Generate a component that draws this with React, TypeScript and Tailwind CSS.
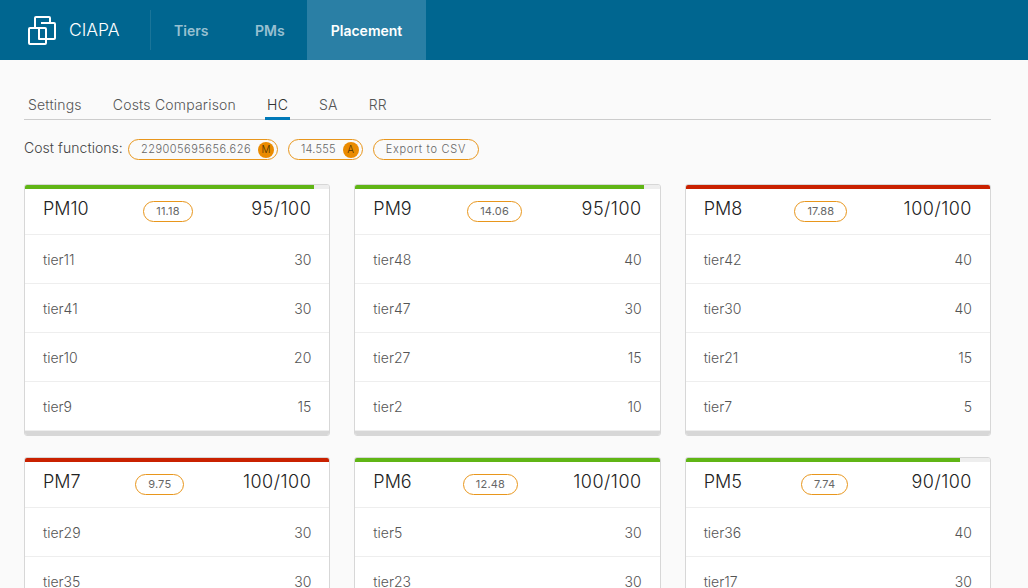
const cards = [
  { name: "PM10", cost: "11.18", used: 95, tiers: [["tier11", 30], ["tier41", 30], ["tier10", 20], ["tier9", 15]] },
  { name: "PM9", cost: "14.06", used: 95, tiers: [["tier48", 40], ["tier47", 30], ["tier27", 15], ["tier2", 10]] },
  { name: "PM8", cost: "17.88", used: 100, tiers: [["tier42", 40], ["tier30", 40], ["tier21", 15], ["tier7", 5]] },
  { name: "PM7", cost: "9.75", used: 100, tiers: [["tier29", 30], ["tier35", 30]] },
  { name: "PM6", cost: "12.48", used: 100, tiers: [["tier5", 30], ["tier23", 30]] },
  { name: "PM5", cost: "7.74", used: 90, tiers: [["tier36", 40], ["tier17", 30]] },
];

const barColor = (name: string) =>
  name === "PM8" || name === "PM7" ? "bg-[#c92100]" : "bg-[#60b515]";

function Logo() {
  return (
    <svg width="30" height="30" viewBox="0 0 30 30" fill="none" stroke="white" strokeWidth="2" strokeLinejoin="round">
      <rect x="2" y="13" width="17" height="16" rx="1" />
      <path d="M8 13V3a1 1 0 0 1 1-1h13a1 1 0 0 1 1 1v5" />
      <path d="M14 8h13a1 1 0 0 1 1 1v14a1 1 0 0 1-1 1h-8" />
      <path d="M12 13v11h7" />
    </svg>
  );
}

function Pill({ children, className = "" }: { children: React.ReactNode; className?: string }) {
  return (
    <span className={`flex h-[21px] items-center rounded-full border border-[#e8961c] text-[11px] text-[#666] ${className}`}>
      {children}
    </span>
  );
}

function Letter({ children }: { children: string }) {
  return (
    <span className="ml-[7px] flex h-4 w-4 items-center justify-center rounded-full bg-[#ea8b00] text-[10px] tracking-normal text-[#4a3000]">
      {children}
    </span>
  );
}

export default function App() {
  return (
    <div className="h-[588px] overflow-hidden bg-[#fafafa] font-['Inter','Open_Sans',sans-serif]">
      <header className="flex h-[60px] items-stretch bg-[#006690] text-white">
        <div className="flex w-[150px] items-center pl-[27px]">
          <Logo />
          <span className="ml-[12px] text-[17.5px] font-light">CIAPA</span>
        </div>
        <div className="my-[10px] w-px bg-[#1a7599]" />
        <nav className="flex text-[14px] font-semibold">
          <a className="flex w-[80px] items-center pl-[23px] text-white/60">Tiers</a>
          <a className="flex w-[76px] items-center pl-[24px] text-white/60">PMs</a>
          <a className="flex w-[119px] items-center justify-center bg-[#2a7fa5]">Placement</a>
        </nav>
      </header>

      <main className="pl-6 pr-[37px] pt-[34px]">
        <div className="flex h-[26px] items-start gap-[31px] border-b border-[#ccc] pl-1 text-[14px] font-light tracking-[0.2px] text-[#555]">
          <span>Settings</span>
          <span>Costs Comparison</span>
          <span className="relative text-[#333]">
            HC
            <span className="absolute -inset-x-[2px] top-[23px] h-[3px] bg-[#0079b8]" />
          </span>
          <span>SA</span>
          <span>RR</span>
        </div>

        <div className="mt-[19px] flex items-center gap-[10px] text-[14px] font-light text-[#444]">
          <span className="mr-[-5px] -translate-y-[2px] tracking-[0.05px]">Cost functions:</span>
          <Pill className="pl-3 pr-[3px] tracking-[0.5px]">
            229005695656.626<Letter>M</Letter>
          </Pill>
          <Pill className="pl-3 pr-[3px] tracking-[0.2px]">
            14.555<Letter>A</Letter>
          </Pill>
          <Pill className="px-3 tracking-[0.7px]">Export to CSV</Pill>
        </div>

        <div className="mt-[24px] grid grid-cols-3 gap-x-6 gap-y-[21px]">
          {cards.map((c) => (
            <section key={c.name} className="overflow-hidden rounded-[3px] border border-[#d7d7d7] bg-white">
              <div className="h-1 bg-[#eee]">
                <div className={`h-full ${barColor(c.name)}`} style={{ width: `${c.used}%` }} />
              </div>
              <div className="flex h-[46px] items-center justify-between border-b border-[#eee] px-[18px] text-[#222]">
                <span className="-translate-y-[3px] text-[18px] font-light">{c.name}</span>
                <span className="flex h-[21px] -translate-x-[2px] items-center rounded-full border border-[#e8961c] px-3 text-[11px] tracking-[0.2px] text-[#666]">
                  {c.cost}
                </span>
                <span className="-translate-y-[3px] text-[18px] font-light tracking-[0.5px]">{c.used}/100</span>
              </div>
              {c.tiers.map(([tier, value]) => (
                <div key={tier} className="flex h-[49px] items-center justify-between border-b border-[#eee] px-[18px] text-[14px] font-light text-[#555] last:border-b-0">
                  <span>{tier}</span>
                  <span>{value}</span>
                </div>
              ))}
              <div className="h-1 bg-[#d7d7d7]" />
            </section>
          ))}
        </div>
      </main>
    </div>
  );
}
